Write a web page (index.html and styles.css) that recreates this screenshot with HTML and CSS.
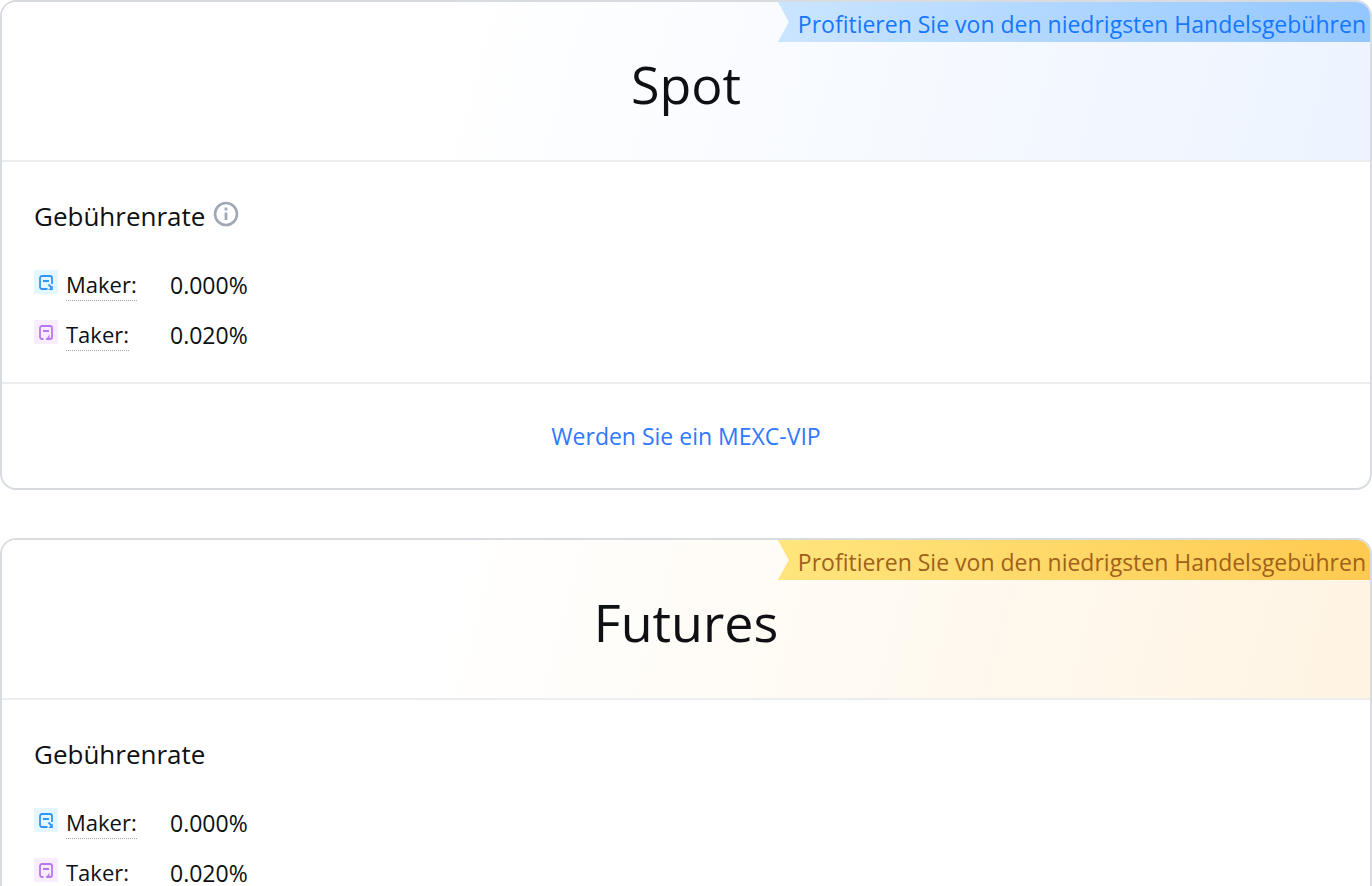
FILE: index.html
```html
<!DOCTYPE html>
<html lang="de">
<head>
  <meta charset="UTF-8" />
  <meta name="viewport" content="width=device-width, initial-scale=1.0" />
  <title>Handelsgebühren</title>
  <link rel="stylesheet" href="styles.css">
</head>
<body>
  <main class="fees">
    <section class="card spot">
      <header class="card-header">
        <div class="ribbon">Profitieren Sie von den niedrigsten Handelsgebühren</div>
        <h2>Spot</h2>
      </header>
      <div class="card-body">
        <h3>
          Gebührenrate
          <svg class="info" viewBox="0 0 26 26" fill="none" stroke="#a0a8b5">
            <circle cx="13" cy="13" r="11" stroke-width="2.6" />
            <path d="M13 11.5v7.5" stroke-width="2.8" />
            <path d="M13 6.6v2.8" stroke-width="2.8" />
          </svg>
        </h3>
        <dl>
          <div class="rate">
            <dt>
              <svg class="icon" viewBox="0 0 24 24" fill="none" stroke="#2f96ff" stroke-width="1.8">
                <rect width="24" height="24" fill="#e4f6ff" stroke="none" />
                <path d="M13.5 19H8a2 2 0 0 1-2-2V8a2 2 0 0 1 2-2h8a2 2 0 0 1 2 2v6" />
                <path d="M9 11h6" />
                <path d="M14.5 14.5l3 3" />
                <path d="M18.8 15.5V20h-4.5z" fill="#2f96ff" stroke="none" />
              </svg>
              <span class="label">Maker:</span>
            </dt>
            <dd>0.000%</dd>
          </div>
          <div class="rate">
            <dt>
              <svg class="icon" viewBox="0 0 24 24" fill="none" stroke="#b578f2" stroke-width="1.8">
                <rect width="24" height="24" fill="#f7edff" stroke="none" />
                <path d="M9.5 19H8a2 2 0 0 1-2-2V8a2 2 0 0 1 2-2h8a2 2 0 0 1 2 2v9a2 2 0 0 1-2 2h-3.5" />
                <path d="M9 11h6" />
                <path d="M11.5 20l4-5.5V19z" fill="#b578f2" stroke="none" />
              </svg>
              <span class="label">Taker:</span>
            </dt>
            <dd>0.020%</dd>
          </div>
        </dl>
      </div>
      <footer class="card-footer">
        <a href="#vip">Werden Sie ein MEXC-VIP</a>
      </footer>
    </section>

    <section class="card futures">
      <header class="card-header">
        <div class="ribbon">Profitieren Sie von den niedrigsten Handelsgebühren</div>
        <h2>Futures</h2>
      </header>
      <div class="card-body">
        <h3>Gebührenrate</h3>
        <dl>
          <div class="rate">
            <dt>
              <svg class="icon" viewBox="0 0 24 24" fill="none" stroke="#2f96ff" stroke-width="1.8">
                <rect width="24" height="24" fill="#e4f6ff" stroke="none" />
                <path d="M13.5 19H8a2 2 0 0 1-2-2V8a2 2 0 0 1 2-2h8a2 2 0 0 1 2 2v6" />
                <path d="M9 11h6" />
                <path d="M14.5 14.5l3 3" />
                <path d="M18.8 15.5V20h-4.5z" fill="#2f96ff" stroke="none" />
              </svg>
              <span class="label">Maker:</span>
            </dt>
            <dd>0.000%</dd>
          </div>
          <div class="rate">
            <dt>
              <svg class="icon" viewBox="0 0 24 24" fill="none" stroke="#b578f2" stroke-width="1.8">
                <rect width="24" height="24" fill="#f7edff" stroke="none" />
                <path d="M9.5 19H8a2 2 0 0 1-2-2V8a2 2 0 0 1 2-2h8a2 2 0 0 1 2 2v9a2 2 0 0 1-2 2h-3.5" />
                <path d="M9 11h6" />
                <path d="M11.5 20l4-5.5V19z" fill="#b578f2" stroke="none" />
              </svg>
              <span class="label">Taker:</span>
            </dt>
            <dd>0.020%</dd>
          </div>
        </dl>
      </div>
    </section>
  </main>
</body>
</html>
```
FILE: styles.css
```css
* {
  box-sizing: border-box;
}
body {
  margin: 0;
  background: #fff;
  color: #0e1013;
  font-family: "Segoe UI", "Open Sans", "Noto Sans", sans-serif;
  font-size: 23px;
  line-height: 32px;
}
h2, h3, dl, dd {
  margin: 0;
  font-weight: 400;
}
.fees {
  display: flex;
  flex-direction: column;
  gap: 48px;
}
.card {
  border: 2px solid #d8dce0;
  border-radius: 16px;
  overflow: hidden;
}
.card-header {
  position: relative;
  padding: 48px 32px 42px;
  border-bottom: 2px solid #ecedef;
  text-align: center;
}
.spot .card-header {
  background: linear-gradient(105deg, #fff 32%, #edf4ff 100%);
}
.futures .card-header {
  background: linear-gradient(105deg, #fff 32%, #fff4e3 100%);
}
h2 {
  font-size: 52px;
  line-height: 68px;
}

/* ribbon in the top right corner, notched on its left side */
.ribbon {
  position: absolute;
  top: 0;
  right: 0;
  height: 40px;
  padding: 0 4px 0 20px;
  line-height: 44px;
  white-space: nowrap;
  clip-path: polygon(0 0, 100% 0, 100% 100%, 0 100%, 11px 50%);
}
.spot .ribbon {
  background: linear-gradient(90deg, #cae5ff, #93c7ff);
  color: #1677ff;
}
.futures .ribbon {
  background: linear-gradient(90deg, #ffe57d, #ffca50);
  color: #a0611a;
}

.card-body {
  padding: 36px 32px 32px;
}
h3 {
  display: flex;
  align-items: center;
  gap: 8px;
  margin-bottom: 30px;
  font-size: 26px;
  line-height: 36px;
}
.info {
  width: 26px;
  height: 26px;
  margin-bottom: 4px;
}
dl {
  display: flex;
  flex-direction: column;
  gap: 14px;
}
.rate {
  display: flex;
  gap: 32px;
  height: 36px;
}
dt {
  display: flex;
  gap: 8px;
  min-width: 104px;
}
.icon {
  width: 24px;
  height: 24px;
  margin-top: 6px;
}
.label {
  height: 37px;
  font-size: 22px;
  line-height: 40px;
  border-bottom: 1px dotted #a0a4aa;
}
dd {
  line-height: 42px;
}
.card-footer {
  padding: 36px 32px;
  border-top: 2px solid #ecedef;
  text-align: center;
}
.card-footer a {
  color: #3078ff;
  text-decoration: none;
}
```
